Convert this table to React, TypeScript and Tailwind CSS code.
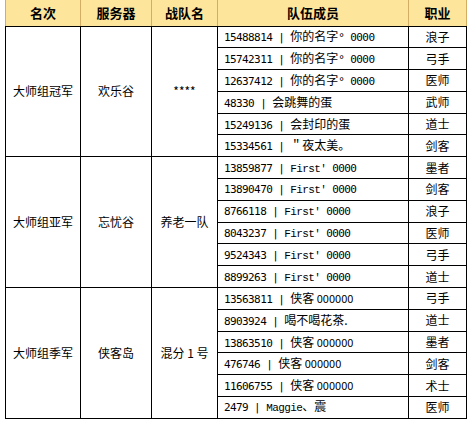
import React from 'react'

type Member = { id: string; name: React.ReactNode; job: string }
type Group = { rank: string; server: string; team: string; members: Member[] }

const cjk = '"Noto Sans CJK SC", "Noto Sans", sans-serif'

const Num = ({ children }: { children: React.ReactNode }) => (
  <span className="font-['DejaVu_Sans_Mono',monospace] text-[11px] tracking-[-0.6px]">{children}</span>
)

const Serif = ({ children }: { children: React.ReactNode }) => (
  <span className="font-['Liberation_Mono',monospace] text-[11px] tracking-[-0.6px]">{children}</span>
)

const first = (
  <>
    <Serif>First′</Serif>
    <Num> 0000</Num>
  </>
)

const yourName = (
  <>
    你的名字<Num>° 0000</Num>
  </>
)

const xiake = (
  <>
    侠客<span className="text-[11px]"> 000000</span>
  </>
)

const groups: Group[] = [
  {
    rank: '大师组冠军',
    server: '欢乐谷',
    team: '****',
    members: [
      { id: '15488814', name: yourName, job: '浪子' },
      { id: '15742311', name: yourName, job: '弓手' },
      { id: '12637412', name: yourName, job: '医师' },
      { id: '48330', name: '会跳舞的蛋', job: '武师' },
      { id: '15249136', name: '会封印的蛋', job: '道士' },
      { id: '15334561', name: '＂夜太美。', job: '剑客' },
    ],
  },
  {
    rank: '大师组亚军',
    server: '忘忧谷',
    team: '养老一队',
    members: [
      { id: '13859877', name: first, job: '墨者' },
      { id: '13890470', name: first, job: '剑客' },
      { id: '8766118', name: first, job: '浪子' },
      { id: '8043237', name: first, job: '医师' },
      { id: '9524343', name: first, job: '弓手' },
      { id: '8899263', name: first, job: '道士' },
    ],
  },
  {
    rank: '大师组季军',
    server: '侠客岛',
    team: '混分 1 号',
    members: [
      { id: '13563811', name: xiake, job: '弓手' },
      { id: '8903924', name: '喝不喝花茶.', job: '道士' },
      { id: '13863510', name: xiake, job: '墨者' },
      { id: '476746', name: xiake, job: '剑客' },
      { id: '11606755', name: xiake, job: '术士' },
      {
        id: '2479',
        name: (
          <>
            <Serif>Maggie</Serif>、震
          </>
        ),
        job: '医师',
      },
    ],
  },
]

const headers = ['名次', '服务器', '战队名', '队伍成员', '职业']

export default function App() {
  return (
    <div className="w-[472px] h-[421px] bg-white pl-[5px] text-black overflow-hidden" style={{ fontFamily: cjk }}>
      <table className="table-fixed border-collapse w-[462px] text-[12px] leading-none">
        <colgroup>
          <col className="w-[75px]" />
          <col className="w-[71px]" />
          <col className="w-[66px]" />
          <col className="w-[191px]" />
          <col className="w-[58px]" />
        </colgroup>
        <thead>
          <tr className="h-[26px] bg-[#fee59c]">
            {headers.map((h) => (
              <th
                key={h}
                className="border-x border-x-[#d2ad63] border-b border-b-black font-bold text-[13px] text-center p-0"
              >
                {h}
              </th>
            ))}
          </tr>
        </thead>
        <tbody>
          {groups.map((g) =>
            g.members.map((m, i) => (
              <tr key={g.rank + m.id} className="h-[21.8px]">
                {i === 0 && (
                  <>
                    <td rowSpan={6} className="border border-black text-center p-0">
                      {g.rank}
                    </td>
                    <td rowSpan={6} className="border border-black text-center p-0">
                      {g.server}
                    </td>
                    <td rowSpan={6} className="border border-black text-center p-0">
                      {g.team}
                    </td>
                  </>
                )}
                <td className="border border-black pl-[6px] pr-0 py-0 whitespace-nowrap">
                  <Num>{m.id} | </Num>
                  {m.name}
                </td>
                <td className="border border-black text-center p-0">{m.job}</td>
              </tr>
            )),
          )}
        </tbody>
      </table>
    </div>
  )
}
